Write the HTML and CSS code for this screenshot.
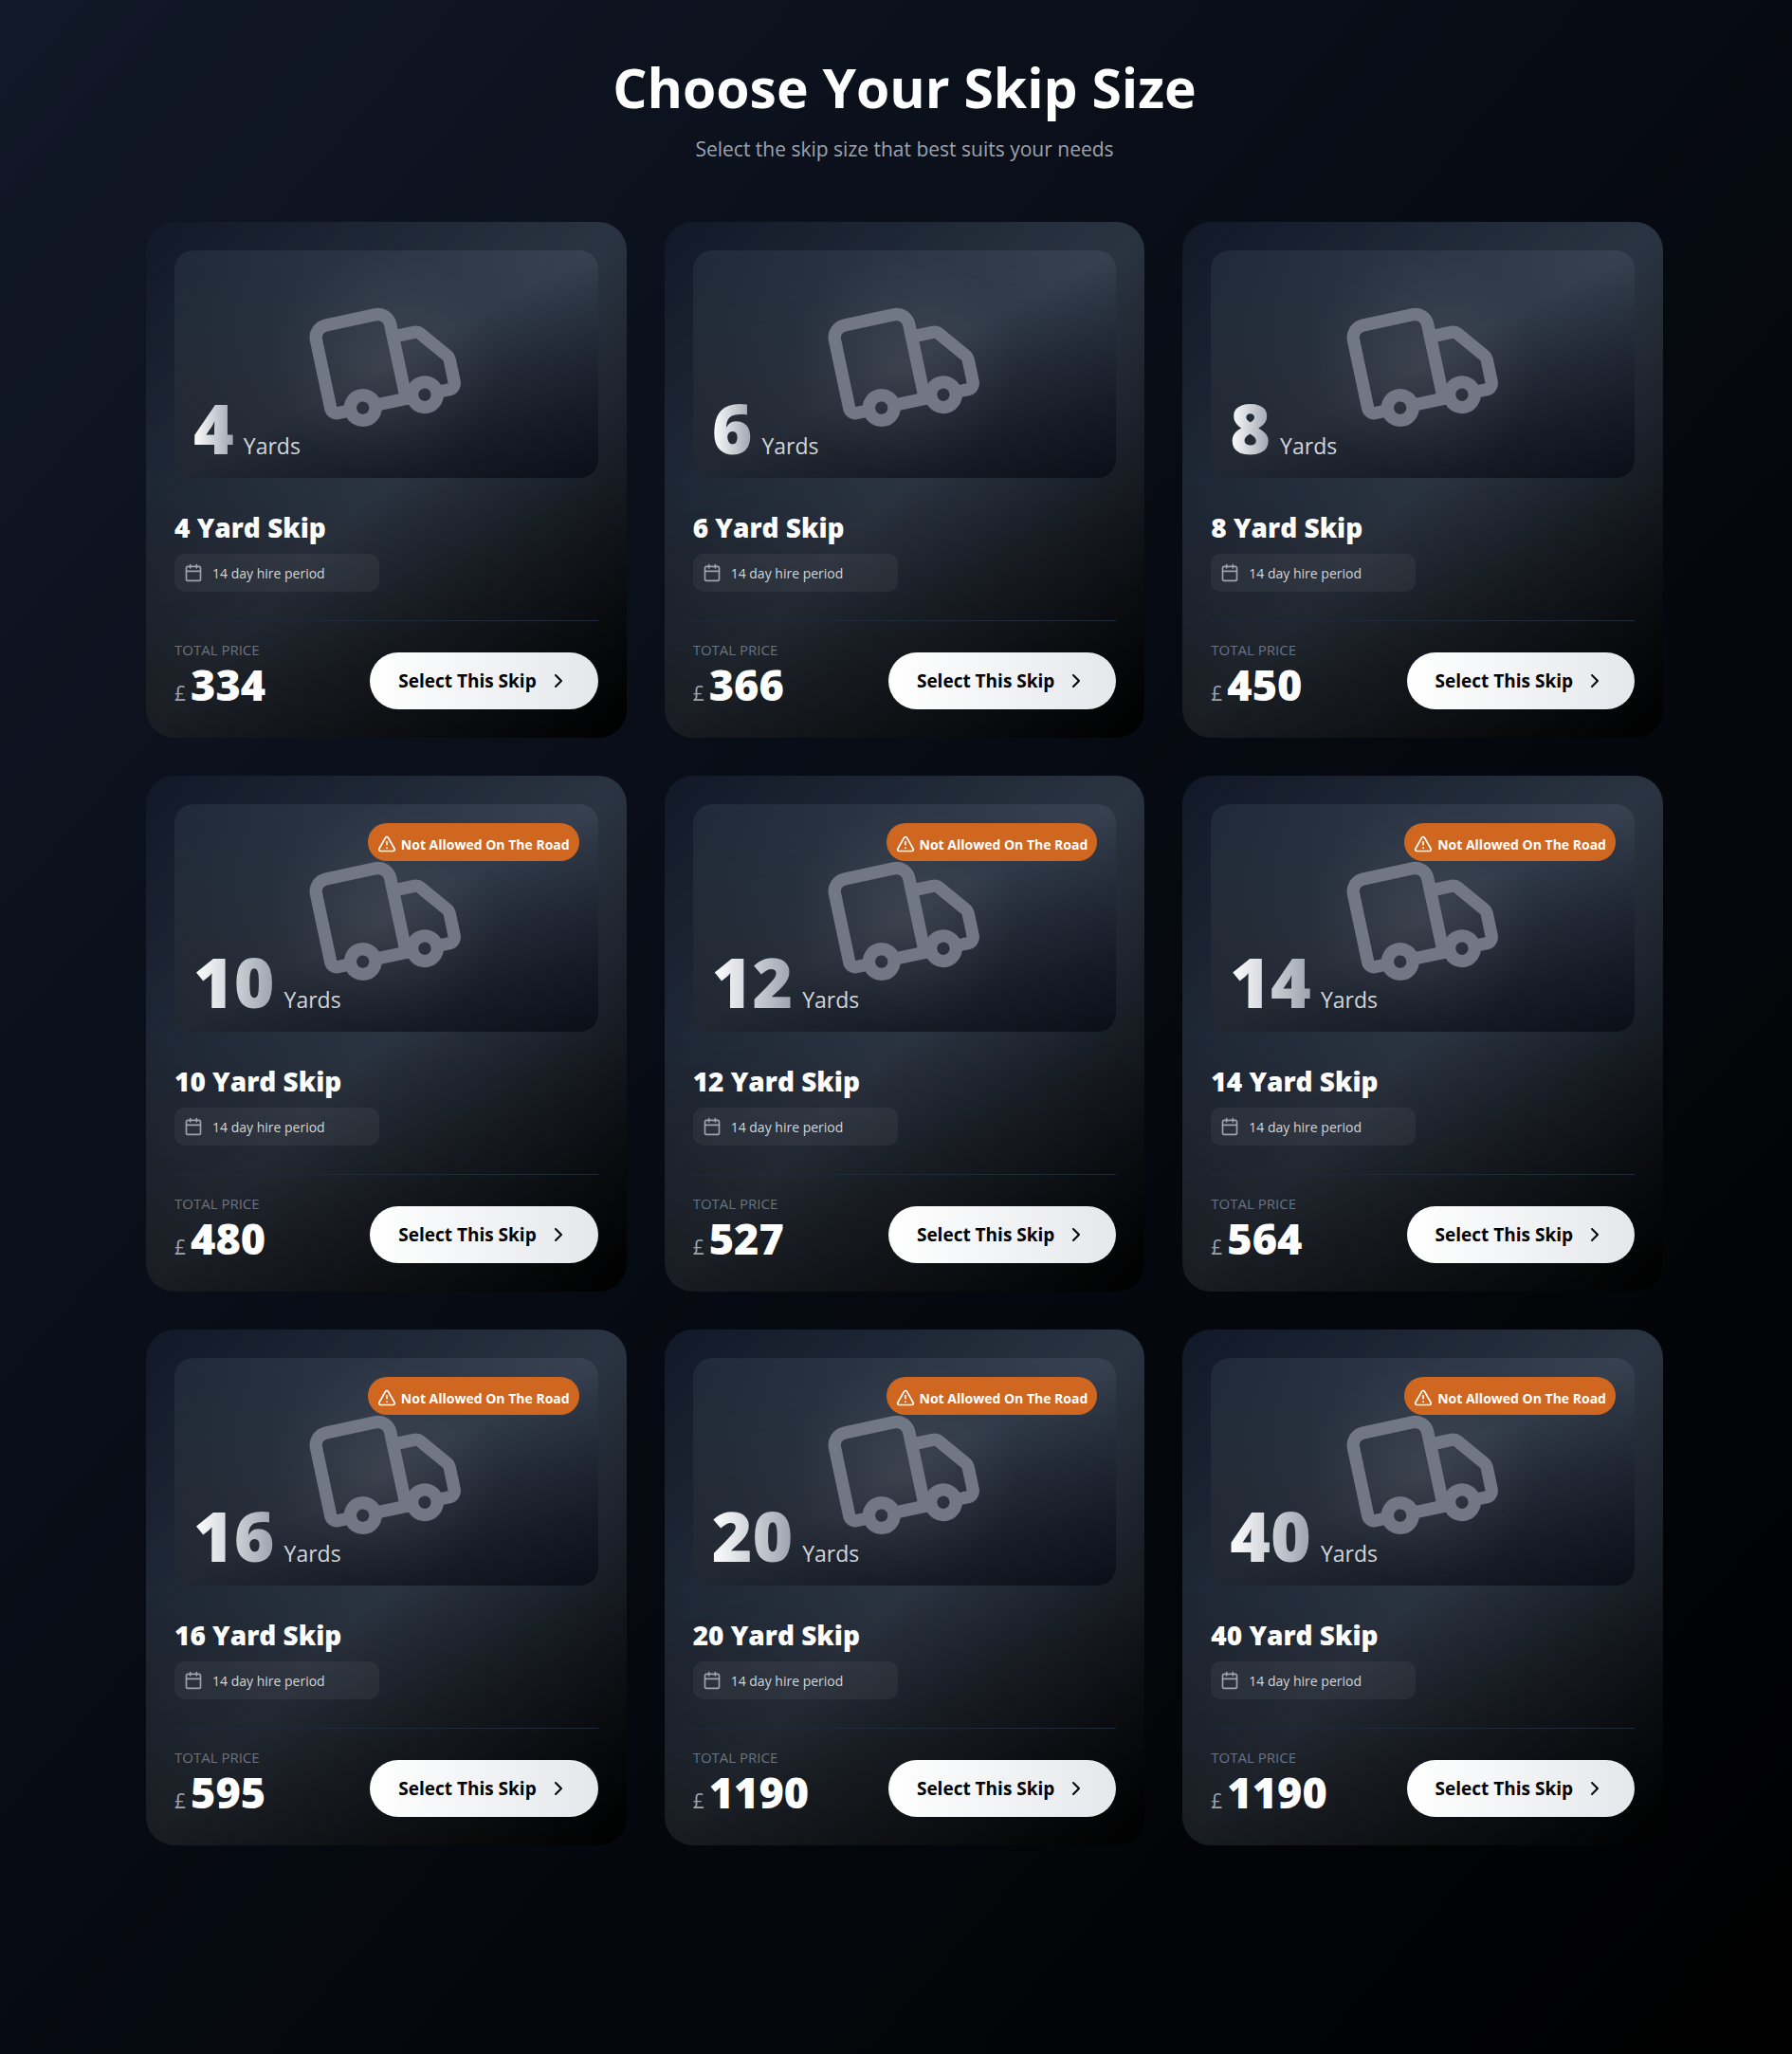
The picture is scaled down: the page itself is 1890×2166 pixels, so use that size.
FILE: index.html
```html
<!DOCTYPE html>
<html lang="en">
<head>
<meta charset="utf-8">
<meta name="viewport" content="width=device-width, initial-scale=1">
<title>Choose Your Skip Size</title>
<link rel="stylesheet" href="styles.css">
</head>
<body>
<svg class="sprite" aria-hidden="true">
  <symbol id="truck" viewBox="0 0 24 24"><path d="M14 18V6a2 2 0 0 0-2-2H4a2 2 0 0 0-2 2v11a1 1 0 0 0 1 1h2"/><path d="M15 18H9"/><path d="M19 18h2a1 1 0 0 0 1-1v-3.65a1 1 0 0 0-.22-.624l-3.48-4.35A1 1 0 0 0 17.52 8H14"/><circle cx="17" cy="18" r="2"/><circle cx="7" cy="18" r="2"/></symbol>
  <symbol id="calendar" viewBox="0 0 24 24"><path d="M8 2v4M16 2v4M3 10h18"/><rect x="3" y="4" width="18" height="18" rx="2"/></symbol>
  <symbol id="warning" viewBox="0 0 24 24"><path d="m21.73 18-8-14a2 2 0 0 0-3.48 0l-8 14A2 2 0 0 0 4 21h16a2 2 0 0 0 1.73-3"/><path d="M12 9v4M12 17h.01"/></symbol>
  <symbol id="chevron" viewBox="0 0 24 24"><path d="m9 18 6-6-6-6"/></symbol>
</svg>
<main class="page">
  <header class="heading">
    <h1>Choose Your Skip Size</h1>
    <p>Select the skip size that best suits your needs</p>
  </header>
  <div class="grid" id="grid"></div>
</main>
<template id="card">
  <article class="card">
    <div class="visual">
      <div class="glow"></div>
      <svg class="icon truck"><use href="#truck"/></svg>
      <div class="badge"><svg class="icon"><use href="#warning"/></svg><span>Not Allowed On The Road</span></div>
      <div class="size"><span class="number"></span><span class="unit">Yards</span></div>
    </div>
    <h2></h2>
    <div class="hire"><svg class="icon"><use href="#calendar"/></svg><span>14 day hire period</span></div>
    <footer class="foot">
      <div class="total">
        <p class="label">Total price</p>
        <p class="price"><span class="currency">£</span><span class="amount"></span></p>
      </div>
      <button class="select" type="button"><span>Select This Skip</span><svg class="icon"><use href="#chevron"/></svg></button>
    </footer>
  </article>
</template>
<script src="script.js"></script>
</body>
</html>
```
FILE: styles.css
```css
* { box-sizing: border-box; }

body {
  margin: 0;
  background: #000;
  color: #fff;
  font-family: "Segoe UI", "Open Sans", "Noto Sans", sans-serif;
}

h1, h2, p { margin: 0; }

.sprite { position: absolute; width: 0; height: 0; }

.icon {
  fill: none;
  stroke: currentColor;
  stroke-width: 2;
  stroke-linecap: round;
  stroke-linejoin: round;
  flex: none;
}

.page {
  min-height: 100vh;
  padding: 58px 32px 60px 50px;
  background: linear-gradient(to bottom right, #111827, #060a12 50%, #000);
}

.heading { text-align: center; }

.heading h1 {
  font-size: 57px;
  line-height: 68px;
  font-weight: 700;
}

.heading p {
  margin-top: 14px;
  font-size: 21px;
  line-height: 34px;
  color: #9ca3af;
}

.grid {
  display: grid;
  grid-template-columns: repeat(3, 1fr);
  gap: 40px;
  max-width: 1600px;
  margin: 60px auto 0;
}

.card {
  display: flex;
  flex-direction: column;
  padding: 30px;
  border-radius: 30px;
  background:
    linear-gradient(to bottom right, transparent, rgba(255, 255, 255, .05) 50%, transparent),
    linear-gradient(to top, rgba(0, 0, 0, .6), transparent 50%),
    linear-gradient(to bottom right, #111827, #1f2937 50%, #000);
}

.visual {
  position: relative;
  height: 240px;
  display: grid;
  place-items: center;
  overflow: hidden;
  border-radius: 20px;
  background:
    linear-gradient(to top, rgba(0, 0, 0, .4), transparent),
    linear-gradient(to bottom right, #1f2937, #374151 50%, #111827);
}

.glow {
  position: absolute;
  width: 240px;
  height: 240px;
  border-radius: 50%;
  background: radial-gradient(closest-side, rgba(255, 255, 255, .07), transparent);
}

.truck {
  width: 160px;
  height: 160px;
  color: #717785;
  transform: rotate(-12deg);
}

.badge {
  position: absolute;
  top: 20px;
  right: 20px;
  display: flex;
  align-items: center;
  gap: 5px;
  height: 40px;
  padding: 4px 10px 0;
  border-radius: 20px;
  background: #d06720;
  font-size: 14px;
  font-weight: 700;
}

.badge .icon { width: 20px; height: 20px; }

.size {
  position: absolute;
  left: 20px;
  bottom: 20px;
  display: flex;
  align-items: baseline;
  gap: 10px;
}

.number {
  font-size: 73px;
  line-height: 64px;
  font-weight: 800;
  background: linear-gradient(to right, #fff, #9ca3af);
  background-clip: text;
  -webkit-background-clip: text;
  color: transparent;
}

.unit { font-size: 23px; line-height: 28px; color: #d1d5db; }

.card h2 {
  margin-top: 30px;
  font-size: 28px;
  line-height: 44px;
  font-weight: 800;
}

.hire {
  display: flex;
  align-items: center;
  gap: 10px;
  width: 216px;
  height: 40px;
  margin-top: 6px;
  padding: 0 10px;
  border-radius: 10px;
  background: rgba(255, 255, 255, .05);
  color: #d1d5db;
  font-size: 14px;
}

.hire .icon { width: 20px; height: 20px; color: #9ca3af; }

.foot {
  display: flex;
  align-items: flex-end;
  justify-content: space-between;
  margin-top: 30px;
  padding-top: 20px;
  border-top: 1px solid #1f2937;
}

.label {
  font-size: 15px;
  line-height: 20px;
  text-transform: uppercase;
  color: #6b7280;
}

.price {
  display: flex;
  align-items: baseline;
  gap: 5px;
}

.currency { font-size: 21px; line-height: 30px; color: #9ca3af; }
.amount { font-size: 45px; line-height: 53px; font-weight: 800; }

.select {
  display: flex;
  align-items: center;
  gap: 11px;
  height: 60px;
  padding: 0 30px;
  border: 0;
  border-radius: 30px;
  background: linear-gradient(to right, #fff, #e5e7eb);
  color: #000;
  font: 700 19px/28px "Segoe UI", "Open Sans", "Noto Sans", sans-serif;
}

.select .icon { width: 24px; height: 24px; }
```
FILE: script.js
```js
const skips = [
  [4, 334], [6, 366], [8, 450],
  [10, 480], [12, 527], [14, 564],
  [16, 595], [20, 1190], [40, 1190],
];
const grid = document.getElementById('grid');
const template = document.getElementById('card');

for (const [yards, price] of skips) {
  const card = template.content.cloneNode(true);
  card.querySelector('.number').textContent = yards;
  card.querySelector('h2').textContent = `${yards} Yard Skip`;
  card.querySelector('.amount').textContent = price;
  if (yards < 10) card.querySelector('.badge').remove();
  grid.append(card);
}
```
